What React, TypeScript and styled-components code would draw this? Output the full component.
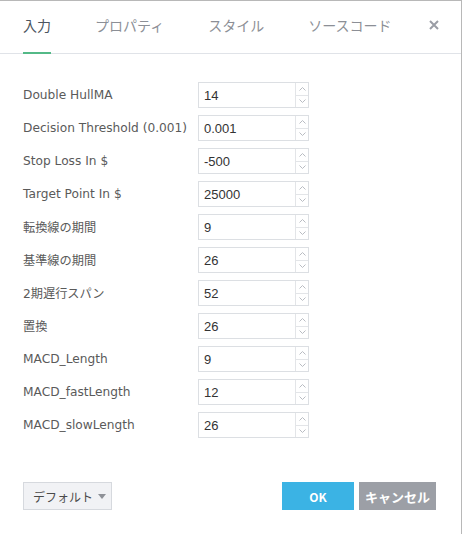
import React from "react";
import styled, { createGlobalStyle } from "styled-components";

const Global = createGlobalStyle`
  html, body { margin: 0; padding: 0; background: #ffffff; }
  * { box-sizing: border-box; }
`;

const Dialog = styled.div`
  width: 462px;
  height: 534px;
  background: #ffffff;
  border-top: 1px solid #b8b8b8;
  border-right: 1px solid #b8b8b8;
  display: flex;
  flex-direction: column;
  font-family: "DejaVu Sans", "Noto Sans CJK JP", sans-serif;
`;

const TabBar = styled.div`
  position: relative;
  height: 53px;
  border-bottom: 1px solid #e0e3e8;
  display: flex;
  align-items: stretch;
  padding-left: 23px;
  gap: 44px;
`;

const Tab = styled.div<{ $active?: boolean }>`
  position: relative;
  display: flex;
  align-items: center;
  padding-bottom: 4px;
  font-family: "Noto Sans CJK JP", sans-serif;
  font-size: 14px;
  color: ${(p) => (p.$active ? "#4c5560" : "#8c8f96")};
  &::after {
    content: "";
    display: ${(p) => (p.$active ? "block" : "none")};
    position: absolute;
    left: 0;
    right: 0;
    bottom: -1px;
    height: 2px;
    background: #53b987;
  }
`;

const Close = styled.div`
  position: absolute;
  right: 20px;
  top: 17px;
  width: 14px;
  height: 14px;
  display: flex;
  align-items: center;
  justify-content: center;
`;

const Body = styled.div`
  padding: 28px 0 0 23px;
  display: flex;
  flex-direction: column;
  gap: 7px;
`;

const Row = styled.div`
  display: grid;
  grid-template-columns: 175px 111px;
  align-items: center;
  height: 26px;
`;

const Label = styled.div`
  font-size: 12.2px;
  color: #5a5a5a;
  white-space: nowrap;
`;

const InputBox = styled.div`
  height: 26px;
  border: 1px solid #dcdfe3;
  display: flex;
  background: #fff;
`;

const Value = styled.div`
  flex: 1;
  display: flex;
  align-items: center;
  padding-left: 5px;
  font-family: "Liberation Sans", sans-serif;
  font-size: 13px;
  color: #333;
`;

const Spinner = styled.div`
  width: 13px;
  border-left: 1px solid #e3e5e8;
  display: flex;
  flex-direction: column;
`;

const SpinBtn = styled.div<{ $down?: boolean }>`
  flex: 1;
  display: flex;
  align-items: center;
  justify-content: center;
  border-top: ${(p) => (p.$down ? "1px solid #e3e5e8" : "none")};
`;

const Footer = styled.div`
  margin-top: auto;
  padding: 0 25px 24px 23px;
  display: flex;
  align-items: center;
`;

const DefaultBtn = styled.div`
  width: 89px;
  height: 28px;
  border: 1px solid #d6d9de;
  background: #f1f2f5;
  display: flex;
  align-items: center;
  padding-left: 9px;
  gap: 5px;
  white-space: nowrap;
  font-family: "Noto Sans CJK JP", sans-serif;
  font-size: 12px;
  color: #4a4a4a;
`;

const Caret = styled.span`
  width: 0;
  height: 0;
  border-left: 4px solid transparent;
  border-right: 4px solid transparent;
  border-top: 5px solid #8e9197;
`;

const Spacer = styled.div`
  flex: 1;
`;

const ActionBtn = styled.div<{ $kind: "ok" | "cancel"; $w: number }>`
  width: ${(p) => p.$w}px;
  height: 28px;
  margin-left: ${(p) => (p.$kind === "cancel" ? "5px" : "0")};
  background: ${(p) => (p.$kind === "ok" ? "#3bb3e4" : "#9c9fa6")};
  color: #ffffff;
  display: flex;
  align-items: center;
  justify-content: center;
  font-family: "Noto Sans CJK JP", sans-serif;
  font-weight: 700;
  font-size: ${(p) => (p.$kind === "ok" ? "12px" : "13px")};
`;

const rows: [string, string][] = [
  ["Double HullMA", "14"],
  ["Decision Threshold (0.001)", "0.001"],
  ["Stop Loss In $", "-500"],
  ["Target Point In $", "25000"],
  ["転換線の期間", "9"],
  ["基準線の期間", "26"],
  ["2期遅行スパン", "52"],
  ["置換", "26"],
  ["MACD_Length", "9"],
  ["MACD_fastLength", "12"],
  ["MACD_slowLength", "26"],
];

const Up = () => (
  <svg width="7" height="4" viewBox="0 0 7 4">
    <path d="M0.5 3.5 L3.5 0.5 L6.5 3.5" fill="none" stroke="#b9bcc2" strokeWidth="1" />
  </svg>
);
const Down = () => (
  <svg width="7" height="4" viewBox="0 0 7 4">
    <path d="M0.5 0.5 L3.5 3.5 L6.5 0.5" fill="none" stroke="#b9bcc2" strokeWidth="1" />
  </svg>
);

export default function App() {
  return (
    <>
      <Global />
      <Dialog>
        <TabBar>
          <Tab $active>入力</Tab>
          <Tab>プロパティ</Tab>
          <Tab>スタイル</Tab>
          <Tab>ソースコード</Tab>
          <Close>
            <svg width="10" height="10" viewBox="0 0 10 10">
              <path d="M1 1 L9 9 M9 1 L1 9" stroke="#9a9da5" strokeWidth="2" />
            </svg>
          </Close>
        </TabBar>
        <Body>
          {rows.map(([label, value]) => (
            <Row key={label}>
              <Label>{label}</Label>
              <InputBox>
                <Value>{value}</Value>
                <Spinner>
                  <SpinBtn><Up /></SpinBtn>
                  <SpinBtn $down><Down /></SpinBtn>
                </Spinner>
              </InputBox>
            </Row>
          ))}
        </Body>
        <Footer>
          <DefaultBtn>
            デフォルト
            <Caret />
          </DefaultBtn>
          <Spacer />
          <ActionBtn $kind="ok" $w={72}>OK</ActionBtn>
          <ActionBtn $kind="cancel" $w={77}>キャンセル</ActionBtn>
        </Footer>
      </Dialog>
    </>
  );
}
